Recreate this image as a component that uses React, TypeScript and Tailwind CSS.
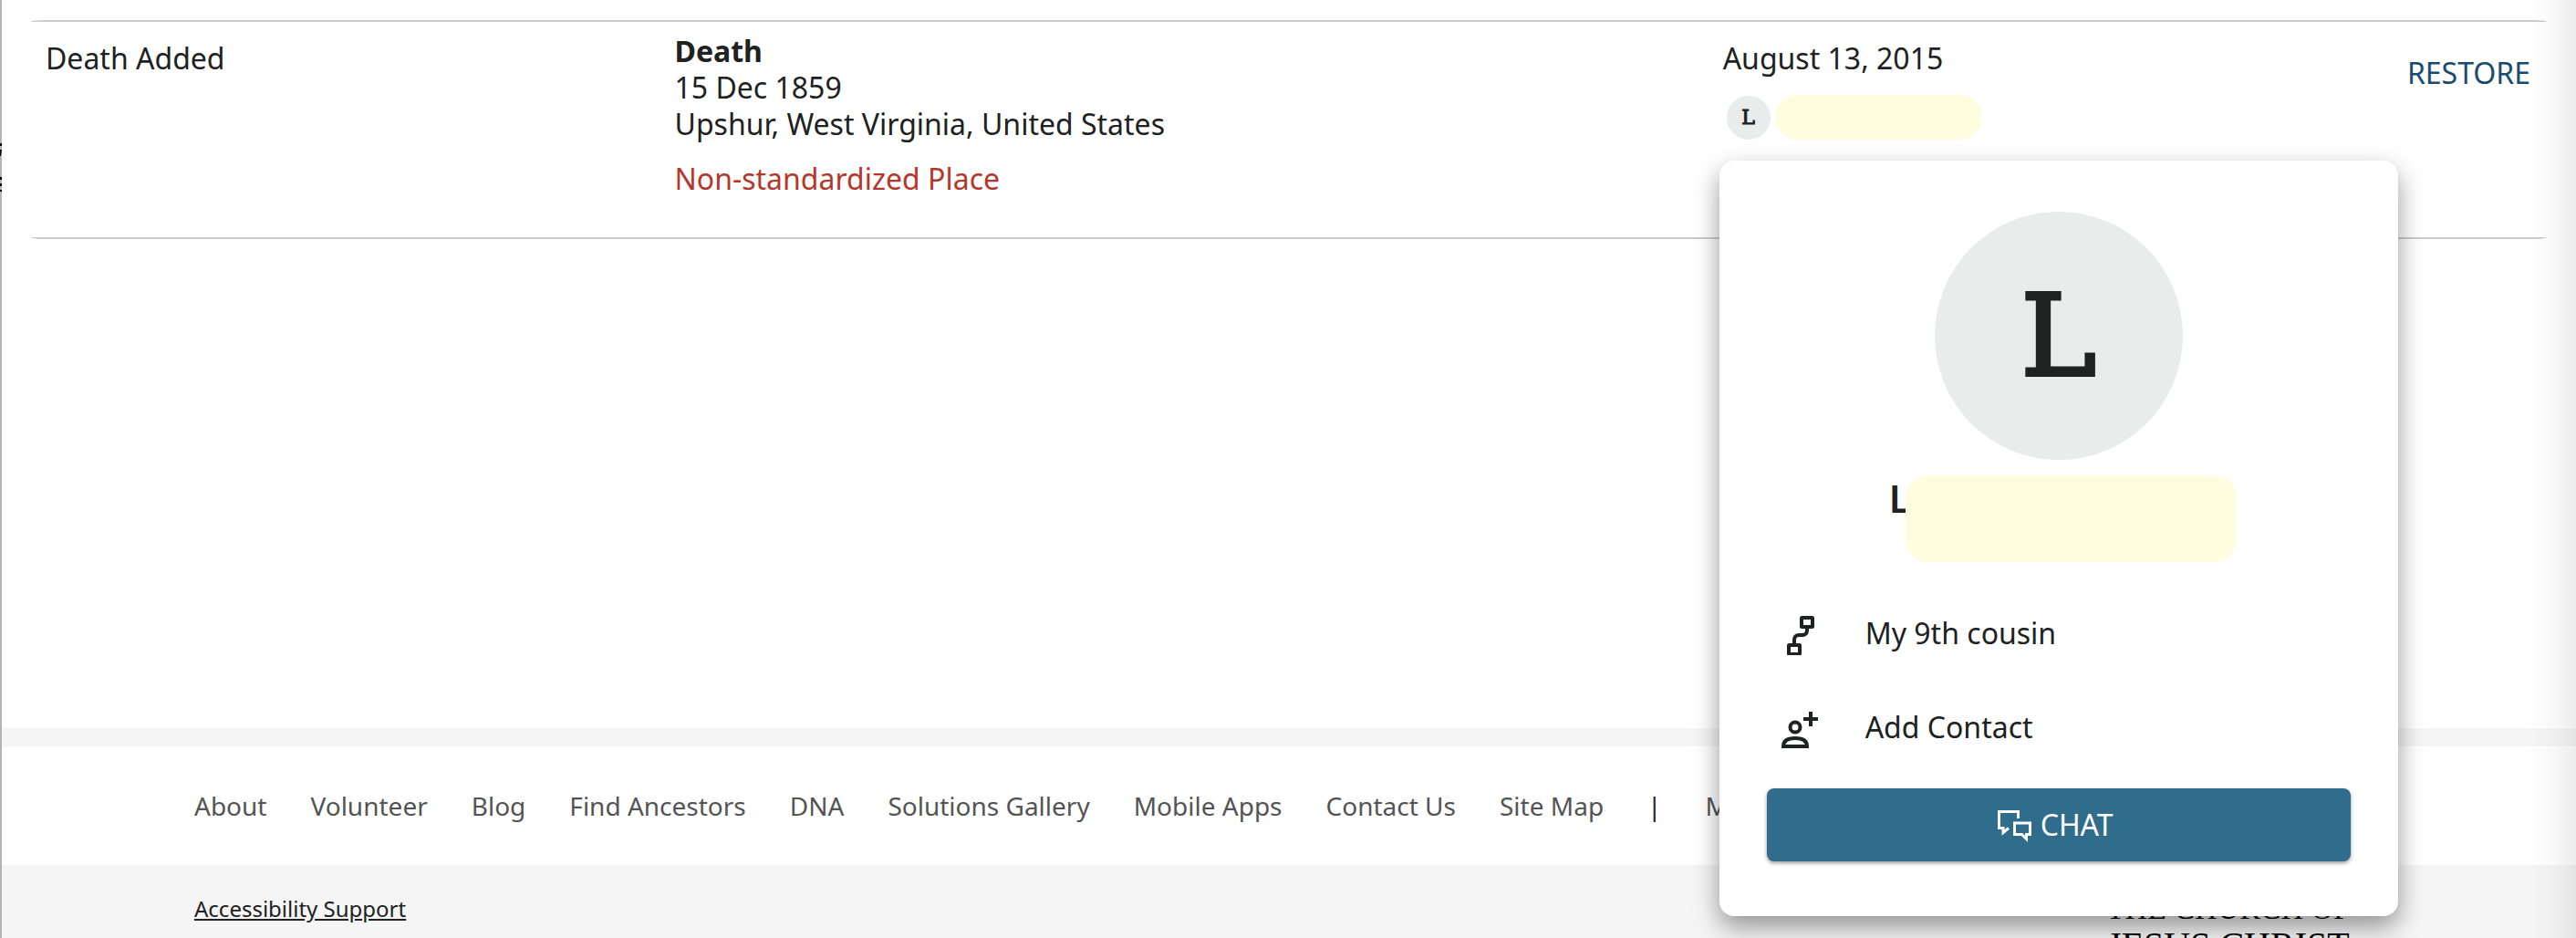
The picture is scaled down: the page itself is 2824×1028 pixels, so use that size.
import type { ReactNode } from "react";

const footerLinks = [
  "About",
  "Volunteer",
  "Blog",
  "Find Ancestors",
  "DNA",
  "Solutions Gallery",
  "Mobile Apps",
  "Contact Us",
  "Site Map",
];

function RelationshipIcon() {
  return (
    <svg width="48" height="48" viewBox="0 -3 48 48" fill="none" stroke="currentColor" strokeWidth="4">
      <rect x="24" y="4" width="12" height="10" rx="0.5" />
      <rect x="10" y="34" width="12" height="10" rx="0.5" />
      <path d="M30 14v4c0 3-2 5-5 5h-4c-3 0-5 2-5 5v6" />
    </svg>
  );
}

function AddContactIcon() {
  return (
    <svg width="48" height="48" viewBox="0 -3 48 48" fill="none" stroke="currentColor" strokeWidth="4">
      <circle cx="17" cy="21" r="5.5" />
      <path d="M4 42c0-6 5-9 13-9s13 3 13 9z" />
      <path d="M34 4v16M26 12h16" />
    </svg>
  );
}

function ChatIcon() {
  return (
    <svg width="40" height="40" viewBox="0 0 40 40" fill="none" stroke="currentColor" strokeWidth="3">
      <path d="M23.500 13V5.500h-21v18H7v5l6-5" />
      <path d="M19.500 18h17v12.500h-4v5l-5-5h-8z" />
    </svg>
  );
}

function CardRow({ icon, children }: { icon: ReactNode; children: ReactNode }) {
  return (
    <button type="button" className="flex h-[103px] items-center gap-[46px] px-[14px] text-left">
      {icon}
      <span>{children}</span>
    </button>
  );
}

function ContactCard() {
  return (
    <div className="absolute top-[152px] left-3 z-10 flex w-[744px] flex-col rounded-2xl bg-white px-[52px] pt-14 pb-[60px] shadow-[0_12px_28px_rgba(0,0,0,0.4)]">
      <div className="flex size-[272px] items-center justify-center self-center rounded-full bg-[#eaeceb] font-['DejaVu_Serif'] text-[124px] [-webkit-text-stroke:4px_#202121]">
        L
      </div>
      <div className="mt-[17px] flex pr-[125px] pl-[134px]">
        <h2 className="w-[18px] text-[42px] leading-[50px] font-semibold">L</h2>
        <div className="relative h-[95px] flex-1 rounded-3xl bg-[#fffddf]" />
      </div>
      <div className="mt-[26px] flex flex-col">
        <CardRow icon={<RelationshipIcon />}>My 9th cousin</CardRow>
        <CardRow icon={<AddContactIcon />}>Add Contact</CardRow>
      </div>
      <button
        type="button"
        className="mt-4 flex h-20 items-center justify-center gap-2 rounded-lg bg-[#306c8b] pr-2 text-white shadow-[0_2px_4px_rgba(0,0,0,0.4)]"
      >
        <ChatIcon />
        CHAT
      </button>
    </div>
  );
}

export default function App() {
  return (
    <div className="relative flex h-screen flex-col overflow-hidden bg-white font-['Noto_Sans',sans-serif] text-[32px] leading-10 text-[#202121]">
      <main className="flex-1 pt-[22px] pr-8 pl-[34px]">
        <table className="w-full table-fixed border-separate border-spacing-0 text-left">
          <tbody>
            <tr className="align-top">
              <td className="w-1/4 rounded-l-[16px_2px] border-y-2 border-[#c9cccb] px-4 pt-5">Death Added</td>
              <td className="w-5/12 border-y-2 border-[#c9cccb] px-4 pt-3 pb-11">
                <div className="font-bold">Death</div>
                <div>15 Dec 1859</div>
                <div>Upshur, West Virginia, United States</div>
                <div className="mt-5 text-[#b5372c]">Non-standardized Place</div>
              </td>
              <td className="relative w-1/4 border-y-2 border-[#c9cccb] px-4 pt-5">
                <div>August 13, 2015</div>
                <div className="mt-5 flex items-center gap-[5px] pl-1">
                  <div className="flex size-12 items-center justify-center rounded-full bg-[#eaeceb] font-['DejaVu_Serif'] text-[22px] [-webkit-text-stroke:1px_#202121]">
                    L
                  </div>
                  <div className="h-[49px] w-[227px] rounded-3xl bg-[#fffddf]" />
                </div>
                <ContactCard />
              </td>
              <td className="w-1/12 rounded-r-[16px_2px] border-y-2 border-[#c9cccb] pt-9 pr-[18px] text-right">
                <button type="button" className="text-[#1b4a70]">
                  RESTORE
                </button>
              </td>
            </tr>
          </tbody>
        </table>
      </main>

      <footer className="border-t-20 border-[#f5f5f5]">
        <nav className="flex h-[130px] items-center gap-12 px-[213px] text-[28px] whitespace-nowrap text-[#535454]">
          {footerLinks.map((label) => (
            <a key={label} href="#">
              {label}
            </a>
          ))}
          <span className="text-[#202121]">|</span>
          <a href="#">More Sites</a>
        </nav>
        <div className="flex h-20 items-start justify-between bg-[#f5f5f5] px-[213px]">
          <a href="#" className="pt-7 text-[24px] underline">
            Accessibility Support
          </a>
          <div className="pt-7 pr-[34px] text-center font-['Liberation_Serif',serif] text-black">
            <div className="text-[34px]">THE CHURCH OF</div>
            <div className="text-[40px]">JESUS CHRIST</div>
          </div>
        </div>
      </footer>

      {/* Sliver of the page behind, along the left edge */}
      <div className="absolute inset-y-0 left-0 w-[2px] bg-[#b4b4b4]">
        <svg width="2" height="220" viewBox="0 0 2 220" fill="#000">
          <path d="M0 157h2v3H0zM0 164h2l-1 7H0zM0 194h2v3H0zM0 201h2v3H0zM0 208h2v2H0z" />
        </svg>
      </div>
      <div className="pointer-events-none absolute inset-y-0 right-0 w-14 bg-linear-to-r from-transparent via-black/2 to-black/7" />
    </div>
  );
}
